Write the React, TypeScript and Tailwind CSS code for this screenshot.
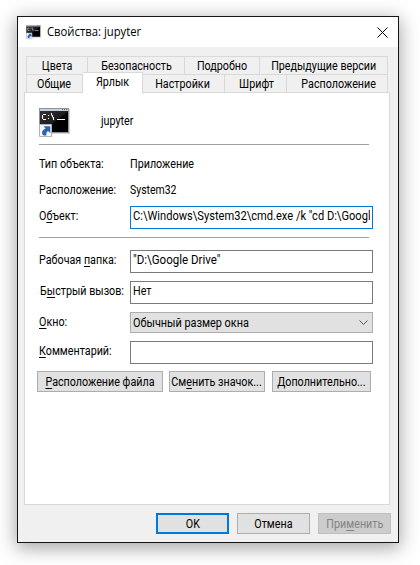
import type { ReactNode } from "react";

function Text({ children, className = "origin-left scale-x-[0.895]" }: { children: ReactNode; className?: string }) {
  return <span className={`inline-block whitespace-nowrap ${className}`}>{children}</span>;
}

function Tab({ children, className }: { children: ReactNode; className: string }) {
  return (
    <div className={`flex shrink-0 items-center justify-center border-r border-[#d9d9d9] ${className}`}>
      <Text className="origin-center scale-x-[0.895]">{children}</Text>
    </div>
  );
}

function Button({ children, className }: { children: ReactNode; className: string }) {
  return (
    <button className={`flex h-[21px] shrink-0 items-center justify-center ${className}`}>
      <Text className="origin-center scale-x-[0.895]">{children}</Text>
    </button>
  );
}

function Key({ children }: { children: string }) {
  return <span className="underline decoration-1 underline-offset-2">{children}</span>;
}

function Row({ label, children, className }: { label: ReactNode; children: ReactNode; className: string }) {
  return (
    <div className={`flex ${className}`}>
      <div className="w-[91px] shrink-0">{label}</div>
      {children}
    </div>
  );
}

function ConsoleIcon({ className }: { className: string }) {
  return (
    <svg viewBox="0 0 31 31" className={className}>
      <defs>
        <linearGradient id="screen" x1="0" y1="0" x2="1" y2="1">
          <stop offset="0" stopColor="#353535" />
          <stop offset=".5" stopColor="#1c1c1c" />
          <stop offset=".54" stopColor="#000" />
        </linearGradient>
      </defs>
      <path d="M1 1h30v25H1z" fill="#d5d8da" />
      <path d="M0 0h30v25H0z" fill="#8d969e" />
      <path d="M1 1h28v2H1z" fill="#c6d0d8" />
      <path d="M23 1h1v1h-1zM25 1h1v1h-1zM27 1h1v1h-1z" fill="#526273" />
      <path d="M1 3h28v21H1z" fill="url(#screen)" />
      <path d="M7 6.5H4M3.5 7v4M4 11.5h3M9.500 7v1M9.5 10v1M12.500 5v2.500M13.500 7v2.500M14.500 9v3M18 11.500h8" fill="none" stroke="#fff" strokeWidth="1.1" />
      <path d="M.5 16.5h12v12H.5z" fill="#f7f7f7" stroke="#b2b2b2" />
      <path d="M4.5 18.3h6.8v6.9l-2.2-2.1c-1.4.8-2 2-1.6 4.4H4.6C2 25 2.8 22.2 6.6 20.4z" fill="#2866b1" />
    </svg>
  );
}

const field = "h-[23px] w-[243px] shrink-0 overflow-hidden border bg-white pl-[2px] pr-[2px] leading-[19px]";

export default function App() {
  return (
    <main className="h-[565px] w-[420px] overflow-hidden bg-white pl-[17px] pt-4 font-['Roboto','Liberation_Sans',sans-serif] text-[12px] leading-[16px] text-black">
      <section className="flex h-[527px] w-[382px] flex-col border border-[#151515] bg-[#f0f0f0] shadow-[0_4px_18px_1px_rgba(0,0,0,0.36)]">
        <header className="flex h-[30px] shrink-0 items-center bg-white pl-2 pr-[10px]">
          <ConsoleIcon className="h-[15px] w-[15px]" />
          <h1 className="ml-[6px] font-['Open_Sans',sans-serif] text-[12px]">
            <Text className="origin-left scale-x-[0.94]">Свойства: jupyter</Text>
          </h1>
          <svg viewBox="0 0 11 11" className="ml-auto h-[11px] w-[11px]">
            <path d="M.5 .5l10 10M10.5 .5l-10 10" stroke="#000" fill="none" />
          </svg>
        </header>
        <nav className="mt-[9px] ml-2 w-[362px] shrink-0">
          <div className="flex h-[18px] border-l border-t border-[#d9d9d9]">
            <Tab className="w-[61px]">Цвета</Tab>
            <Tab className="w-[97px]">Безопасность</Tab>
            <Tab className="w-[75px]">Подробно</Tab>
            <Tab className="w-[128px]">Предыдущие версии</Tab>
          </div>
          <div className="flex h-[18px] border-l border-t border-[#d9d9d9]">
            <Tab className="w-[56px]">Общие</Tab>
            <Tab className="z-10 -mt-[3px] h-[22px] w-[60px] border-t bg-white pb-[3px]">Ярлык</Tab>
            <Tab className="w-[82px] pr-[2px]">Настройки</Tab>
            <Tab className="w-[62px] pl-[2px]">Шрифт</Tab>
            <Tab className="w-[101px] pl-[3px]">Расположение</Tab>
          </div>
        </nav>
        <div className="ml-[6px] h-[413px] w-[366px] shrink-0 border border-[#d9d9d9] bg-white pl-[14px]">
          <div className="flex h-[51px] pt-[15px]">
            <ConsoleIcon className="h-[31px] w-[31px]" />
            <span className="ml-[31px] mt-[5px]"><Text>jupyter</Text></span>
          </div>
          <div className="h-px w-[330px] bg-[#a0a0a0]" />
          <Row className="mt-[11px] h-[26px]" label={<Text>Тип объекта:</Text>}><Text>Приложение</Text></Row>
          <Row className="h-[24px]" label={<Text>Расположение:</Text>}>
            <Text className="origin-left scale-x-[0.87]">System32</Text>
          </Row>
          <Row className="h-[31px]" label={<div className="mt-[2px]"><Text>О<Key>б</Key>ъект:</Text></div>}>
            <div className={`${field} border-[#0078d7]`}>
              <div className="overflow-hidden">
                <Text className="origin-left scale-x-[0.925]">C:\Windows\System32\cmd.exe /k "cd D:\Google Drive"</Text>
              </div>
            </div>
          </Row>
          <div className="h-px w-[330px] bg-[#a0a0a0]" />
          <Row className="mt-3 h-[31px]" label={<div className="mt-[2px]"><Text>Рабочая <Key>п</Key>апка:</Text></div>}>
            <div className={`${field} border-[#7a7a7a]`}>
              <Text className="origin-left scale-x-[0.96]">"D:\Google Drive"</Text>
            </div>
          </Row>
          <Row className="h-[31px]" label={<div className="ml-px mt-[2px]"><Text>Б<Key>ы</Key>стрый вызов:</Text></div>}>
            <div className={`${field} border-[#7a7a7a]`}><Text>Нет</Text></div>
          </Row>
          <Row className="h-[29px]" label={<div className="mt-[2px]"><Text><Key>О</Key>кно:</Text></div>}>
            <div className="flex h-[21px] w-[243px] items-center justify-between border border-[#adadad] bg-[#e1e1e1] pl-[2px] pr-1">
              <Text className="origin-left scale-x-[0.905]">Обычный размер окна</Text>
              <svg viewBox="0 0 9 6" className="h-[6px] w-[9px]"><path d="M.5 .5l4 4 4-4" stroke="#555" fill="none" /></svg>
            </div>
          </Row>
          <Row className="h-[30px]" label={<div className="mt-[2px]"><Text><Key>К</Key>омментарий:</Text></div>}>
            <div className={`${field} border-[#7a7a7a]`} />
          </Row>
          <div className="-ml-[2px] flex">
            <Button className="w-[126px] border border-[#adadad] bg-[#e1e1e1]"><Key>Р</Key>асположение файла</Button>
            <Button className="ml-[6px] w-[96px] border border-[#adadad] bg-[#e1e1e1]">См<Key>е</Key>нить значок...</Button>
            <Button className="ml-[7px] w-[99px] border border-[#adadad] bg-[#e1e1e1]"><Key>Д</Key>ополнительно...</Button>
          </div>
        </div>
        <footer className="ml-[138px] mt-2 flex gap-2">
          <Button className="w-[73px] border-2 border-[#0078d7] bg-[#e1e1e1]">OK</Button>
          <Button className="w-[73px] border border-[#adadad] bg-[#e1e1e1]">Отмена</Button>
          <Button className="w-[73px] border border-[#bfbfbf] bg-[#cccccc] text-[#838383]">При<Key>м</Key>енить</Button>
        </footer>
      </section>
    </main>
  );
}
